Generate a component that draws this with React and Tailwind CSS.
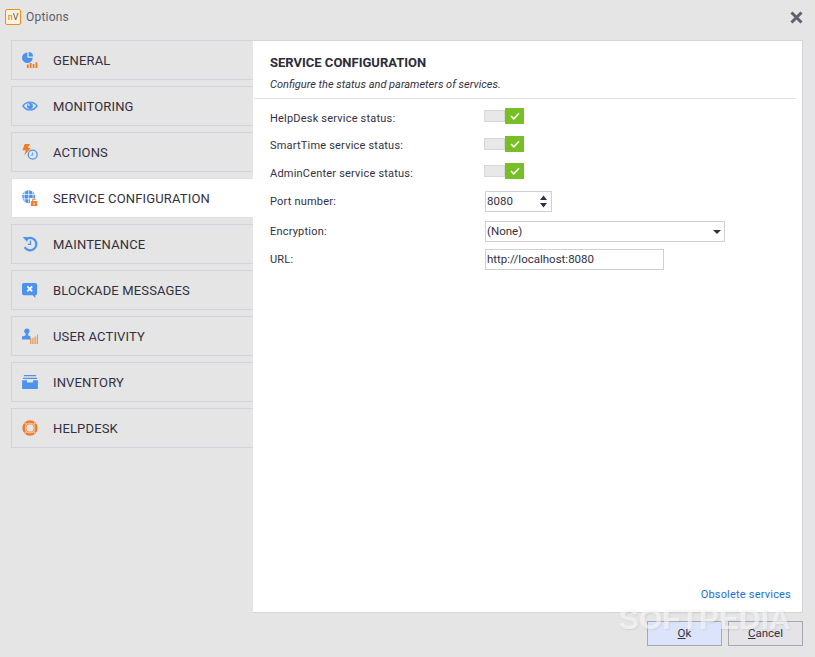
const Font = { fontFamily: "Roboto, sans-serif" };

const S = ({ children, h = 16, vh = 18 }) => (
  <svg width="16" height={h} viewBox={`0 0 18 ${vh}`}>{children}</svg>
);

const icons = {
  general: (
    <S>
      <path d="M6 .5a6 6 0 1 0 6 6H6z" fill="#4b93ee" />
      <path d="M7.500 0a5 5 0 0 1 5 5h-5z" fill="#4b93ee" />
      <path d="M5.500 14h2v4h-2zM8.800 12.500h2V18h-2zM12 13.500h2V18h-2zM15.200 11.500h2V18h-2z" fill="#ee7d2b" />
    </S>
  ),
  monitoring: (
    <S>
      <path d="M1 9c2.200-3 4.900-4.400 8-4.400s5.800 1.400 8 4.400c-2.200 3-4.900 4.400-8 4.400S3.200 12 1 9z" fill="none" stroke="#4b93ee" strokeWidth="1.500" />
      <circle cx="9" cy="9" r="3.300" fill="#4b93ee" />
      <circle cx="7.800" cy="7.800" r="1" fill="#e5e5e5" />
    </S>
  ),
  actions: (
    <S>
      <path d="M3 0h6L6.500 4.500H10L2.500 13l1.800-6H.500z" fill="#ee7d2b" />
      <circle cx="12" cy="12" r="5" fill="#e5e5e5" stroke="#4b93ee" strokeWidth="1.400" />
      <path d="M12 9.500v3h-2" fill="none" stroke="#4b93ee" strokeWidth="1" />
    </S>
  ),
  service: (
    <S>
      <circle cx="7.500" cy="7.500" r="7.300" fill="#4b93ee" />
      <path d="M0 5h15M0 10h15M7.500 0v15M3.500 1.500c-1.500 3.500-1.500 8.500 0 12M11.500 1.500c1.500 3.500 1.500 8.500 0 12" fill="none" stroke="#fff" strokeWidth=".8" />
      <rect x="9" y="9" width="9" height="9" fill="#fff" />
      <path d="M10 12.500h7V18h-7z" fill="#ee7d2b" />
      <path d="M12 12.500V11a1.600 1.600 0 0 1 3 0" fill="none" stroke="#ee7d2b" strokeWidth="1.200" />
      <rect x="13" y="14.500" width="1.200" height="2" fill="#fff" />
    </S>
  ),
  maintenance: (
    <S>
      <path d="M4 4.300A7 7 0 1 1 3 12.500" fill="none" stroke="#4b93ee" strokeWidth="2.400" />
      <path d="M.700 1.200h5.500l-.2 5.500z" fill="#4b93ee" />
      <path d="M9.500 5v4.500H6.500" fill="none" stroke="#4b93ee" strokeWidth="1.400" />
    </S>
  ),
  blockade: (
    <S>
      <path d="M2 1h13a2 2 0 0 1 2 2v10a2 2 0 0 1-2 2v3l-3-3H2a2 2 0 0 1-2-2V3a2 2 0 0 1 2-2z" fill="#4b93ee" />
      <path d="M6 5l5.500 5.500M11.500 5L6 10.500" stroke="#fff" strokeWidth="1.900" />
    </S>
  ),
  user: (
    <S>
      <circle cx="5.500" cy="3.500" r="3" fill="#4b93ee" />
      <path d="M4 6h3v2.500l2.500 1V13H0V9.500l4-1z" fill="#4b93ee" />
      <path d="M9.500 11.500V18M11.500 11.500V18M13.500 10.500V18M15.500 9.500V18M17.500 7.500V18" stroke="#ee7d2b" strokeWidth=".9" />
    </S>
  ),
  inventory: (
    <S h={14} vh={16}>
      <path d="M2 0h14v1.500H2zM1 3h16v1.500H1z" fill="#4b93ee" />
      <path d="M0 6h5.500v2.500h7V6H18v10H0z" fill="#4b93ee" />
    </S>
  ),
  helpdesk: (
    <S>
      <circle cx="9" cy="9" r="7.200" fill="none" stroke="#ee7d2b" strokeWidth="2.800" />
      <circle cx="9" cy="9" r="4.600" fill="none" stroke="#ee7d2b" strokeWidth="1" />
      <path d="M3.300 3.300l2.200 2.200M14.700 3.300l-2.200 2.200M3.300 14.700l2.200-2.200M14.700 14.700l-2.200-2.200" stroke="#f6cfb0" strokeWidth="1.500" />
    </S>
  ),
};

const nav = [
  ["GENERAL", "general"],
  ["MONITORING", "monitoring"],
  ["ACTIONS", "actions"],
  ["SERVICE CONFIGURATION", "service"],
  ["MAINTENANCE", "maintenance"],
  ["BLOCKADE MESSAGES", "blockade"],
  ["USER ACTIVITY", "user"],
  ["INVENTORY", "inventory"],
  ["HELPDESK", "helpdesk"],
];

function NavItem({ label, icon }) {
  const active = icon === "service";
  return (
    <div
      className={`flex h-10 items-center border border-r-0 pl-[10px] ${
        active ? "border-[#e0e0e4] bg-white" : "border-[#d3d3db] bg-[#e5e5e5]"
      }`}
    >
      <div className="flex h-5 w-4 items-center justify-center">{icons[icon]}</div>
      <span className="mt-[2px] ml-[15px] text-[13px] tracking-[0.15px] text-[#33303f]">{label}</span>
    </div>
  );
}

function Toggle() {
  return (
    <div className="flex h-4 w-10 items-center">
      <div className="h-[12px] w-[21px] border border-[#d8d8d8] bg-[#e8e8e8]" />
      <div className="flex h-4 w-[19px] items-center justify-center bg-[#76c025]">
        <svg width="10" height="8" viewBox="0 0 10 8">
          <path d="M1 4l2.800 2.800L9 1.200" fill="none" stroke="#fff" strokeWidth="1.500" />
        </svg>
      </div>
    </div>
  );
}

function Row({ label, className, labelClass = "mt-[2px]", children }) {
  return (
    <div className={`flex items-center ${className}`}>
      <span className={`w-[214px] shrink-0 text-[11px] tracking-[0.2px] text-[#33303f] ${labelClass}`}>{label}</span>
      {children}
    </div>
  );
}

function Field({ className, children }) {
  return (
    <div className={`flex h-[21px] items-center border border-[#cfcfd6] bg-white pl-[1px] text-[11.5px] text-[#33303f] ${className}`}>
      {children}
    </div>
  );
}

export default function App() {
  return (
    <div className="relative flex h-[657px] w-[815px] flex-col overflow-hidden bg-[#e5e5e5]" style={Font}>
      <div className="flex h-10 shrink-0 items-start pt-[9px] pl-[5px]">
        <div className="flex h-4 w-4 items-center justify-center rounded-[2px] border border-[#f08c1a] bg-[#fdf3dc] text-[9px] leading-none">
          <span className="text-[#e8750f]">n</span>
          <span className="text-[#555]">V</span>
        </div>
        <span className="ml-[5px] text-[12px] leading-4 tracking-[0.2px] text-[#5d5d6b]">Options</span>
        <svg className="mt-[2px] mr-[12px] ml-auto" width="13" height="13" viewBox="0 0 13 13">
          <path d="M1.500 1.500l10 10M11.500 1.500l-10 10" stroke="#5f5f6e" strokeWidth="3" />
        </svg>
      </div>

      <div className="flex h-[573px] pr-3 pl-[11px]">
        <div className="flex w-[242px] shrink-0 flex-col gap-[6px]">
          {nav.map(([label, icon]) => (
            <NavItem key={icon} label={label} icon={icon} />
          ))}
        </div>
        <div className="relative flex min-w-0 flex-1 flex-col border border-l-0 border-[#d3d3db] bg-white">
          <div className="mr-[6px] ml-[1px] h-[58px] border-b border-[#e2e2e2] pt-[14px] pl-4">
            <h1 className="text-[13px] leading-4 font-bold text-[#2d2b38]">SERVICE CONFIGURATION</h1>
            <p className="mt-[7px] text-[11px] leading-[14px] text-[#33303f] italic">
              Configure the status and parameters of services.
            </p>
          </div>
          <div className="flex flex-col pl-[17px]">
            <Row label="HelpDesk service status:" labelClass="mt-[6px]" className="mt-[9px] h-4"><Toggle /></Row>
            <Row label="SmartTime service status:" labelClass="mt-1" className="mt-3 h-4"><Toggle /></Row>
            <Row label="AdminCenter service status:" labelClass="mt-[7px]" className="mt-[11px] h-4"><Toggle /></Row>
            <Row label="Port number:" className="mt-3 h-[21px]">
              <Field className="ml-[1px] w-[67px]">
                <span>8080</span>
                <svg className="mr-[3px] ml-auto" width="9" height="15" viewBox="0 0 9 15">
                  <path d="M4.500 1.500L8 6H1zM1 9h7l-3.500 4.500z" fill="#33303f" />
                </svg>
              </Field>
            </Row>
            <Row label="Encryption:" className="mt-[9px] h-[21px]">
              <Field className="ml-[1px] w-[240px]">
                <span>(None)</span>
                <svg className="mr-[3px] ml-auto" width="8" height="4" viewBox="0 0 8 4">
                  <path d="M0 0h8L4 4z" fill="#33303f" />
                </svg>
              </Field>
            </Row>
            <Row label="URL:" className="mt-[7px] h-[21px]">
              <Field className="ml-[1px] w-[179px]">
                <span>http://localhost:8080</span>
              </Field>
            </Row>
          </div>
          <a className="absolute right-[11px] bottom-[10px] text-[11px] leading-[14px] tracking-[0.2px] text-[#1a6fd0]">
            Obsolete services
          </a>
        </div>
      </div>

      <div className="flex justify-end gap-[6px] pt-2 pr-3">
        <button className="h-[25px] w-[75px] border border-[#a8a8b0] bg-[#dbe4fb] text-[11.5px] text-[#33303f]">
          <span className="underline">O</span>k
        </button>
        <button className="h-[25px] w-[75px] border border-[#a8a8b0] bg-[#e3e3e8] text-[11.5px] text-[#33303f]">
          <span className="underline">C</span>ancel
        </button>
      </div>

      <div
        className="pointer-events-none absolute top-[601px] left-[619px] text-[30px] leading-9 font-bold text-white/60"
        style={{ fontFamily: "'Liberation Sans', sans-serif", textShadow: "1px 1px 2px rgba(0,0,0,.08)" }}
      >
        SOFTPEDIA
      </div>
    </div>
  );
}
